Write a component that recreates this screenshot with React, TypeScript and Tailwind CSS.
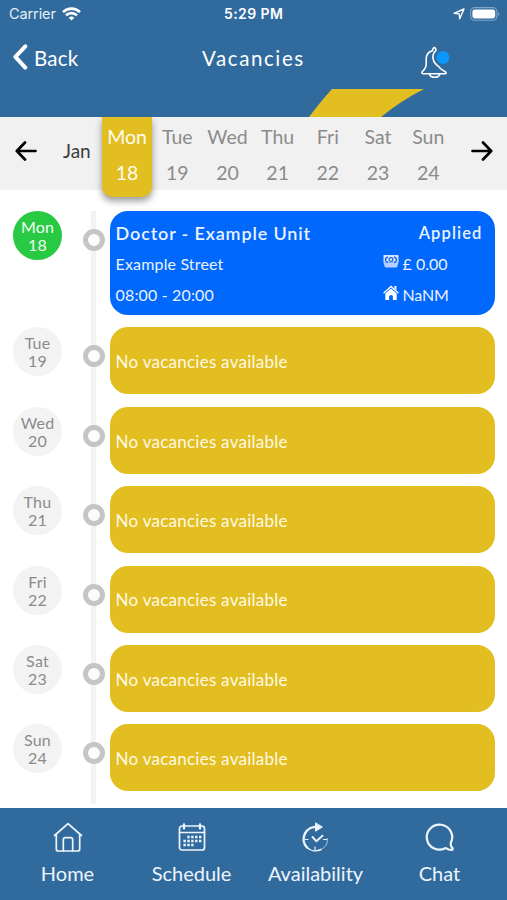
import React, { useState } from "react";

interface Day {
  name: string;
  date: number;
}

const days: Day[] = [
  { name: "Mon", date: 18 },
  { name: "Tue", date: 19 },
  { name: "Wed", date: 20 },
  { name: "Thu", date: 21 },
  { name: "Fri", date: 22 },
  { name: "Sat", date: 23 },
  { name: "Sun", date: 24 },
];

const StatusBar = () => (
  <div className="relative flex h-[28px] items-center justify-between pl-[9px] pr-[7px] font-['Inter',sans-serif] text-white">
    <div className="flex items-center gap-[6px]">
      <span className="text-[14.5px] leading-none tracking-[-0.1px] text-[#e4edf5]">Carrier</span>
      <svg className="mb-[1px]" width="19" height="14" viewBox="0 0 19 14" fill="none" stroke="currentColor" strokeWidth="2.7">
        <path d="M1 5.1a12.2 12.2 0 0 1 17 0" />
        <path d="M4 8.3a8 8 0 0 1 11 0" />
        <path d="M6.7 10.7a4.2 4.2 0 0 1 5.6 0L9.5 13.6z" fill="currentColor" stroke="none" />
      </svg>
    </div>
    <span className="absolute left-[224px] text-[14px] font-semibold leading-none tracking-[0.4px]">5:29 PM</span>
    <div className="flex items-center gap-[5px] pb-[1px]">
      <svg width="12" height="12" viewBox="0 0 12 12" fill="none" stroke="currentColor" strokeWidth="1.4" strokeLinejoin="round">
        <path d="M11 1 6.7 10.8 6.2 5.9 1 5.4z" />
      </svg>
      <svg width="30" height="14" viewBox="0 0 30 14" fill="none">
        <rect x="0.6" y="0.6" width="26.3" height="12.6" rx="4" stroke="#83a6c5" strokeWidth="1.1" />
        <rect x="2.4" y="2.4" width="22.8" height="9" rx="2.3" fill="#fff" />
        <path d="M28.2 5v4.2c1.5-.7 1.5-3.5 0-4.2z" fill="#83a6c5" />
      </svg>
    </div>
  </div>
);

const Header = () => (
  <header className="relative h-[117px] bg-[#316b9e] text-white">
    <StatusBar />
    {/* Yellow stripe */}
    <svg className="absolute left-[308px] top-[88px]" width="118" height="29" viewBox="0 0 118 29">
      <path d="M24 1H116Q94 12 73 29H1Q13 13 24 1z" fill="#e2be20" />
    </svg>
    <div className="relative flex h-[60px] items-center">
      <button className="flex items-center gap-[6px] pl-[13px]">
        <svg className="mb-[2px]" width="15" height="26" viewBox="0 0 15 26" fill="none" stroke="currentColor" strokeWidth="4" strokeLinecap="round" strokeLinejoin="round">
          <path d="M12.3 2.3 2.4 12.8l9.9 10.8" />
        </svg>
        <span className="text-[20.5px] tracking-[0.2px]">Back</span>
      </button>
      <h1 className="absolute left-[202px] text-[20.5px] tracking-[1.6px]">Vacancies</h1>
      {/* Notifications */}
      <svg className="absolute left-[420px] top-[18px]" width="32" height="34" viewBox="0 0 32 34" fill="none" stroke="currentColor" strokeWidth="1.6" strokeLinecap="round" strokeLinejoin="round">
        <path d="M12.7 4.6c-.1-4 3.400-4 3.300 0-2.600 2-3.300 4.600-3 7.600.5 5.200 3.500 7 6.200 8.800 1 2.600 3.800 2.800 6.300 4.900 1 1 .7 1.800-.6 1.800H3.400c-1.500 0-2-1-1-2.200 2-1.800 3.800-3.700 3.800-7.500v-4.500c0-4.600 2-8 6.500-8.900z" />
        <path d="M9.500 27.800c.6 4.600 9.700 4.600 10.300 0" />
        <circle cx="23" cy="11.5" r="6.5" fill="#0c98fb" stroke="none" />
      </svg>
    </div>
  </header>
);

interface WeekStripProps {
  selected: number;
  onSelect: (date: number) => void;
}

const WeekStrip: React.FC<WeekStripProps> = ({ selected, onSelect }) => (
  <div className="relative z-10 flex h-[73px] bg-[#f1f1f1]">
    <div className="flex w-[102px] items-center pl-[15px] pb-[6px]">
      <svg width="22" height="20" viewBox="0 0 22 20" fill="none" stroke="#000" strokeWidth="2.7" strokeLinecap="round" strokeLinejoin="round">
        <path d="M20.5 10H1.8M10 1.5 1.8 10l8.2 8.5" />
      </svg>
      <span className="ml-[26px] pt-[1px] text-[19px] text-[#3c3c3c]">Jan</span>
    </div>
    {days.map((day) => (
      <button
        key={day.date}
        onClick={() => onSelect(day.date)}
        className={`flex w-[50.2px] shrink-0 flex-col items-center gap-[9px] pt-[5.5px] text-[19.5px] leading-[27px] ${
          day.date === selected
            ? "relative h-[80px] rounded-b-[10px] bg-[#e2be20] text-[#fffdf0] shadow-[0_4px_7px_rgba(0,0,0,0.4)] [clip-path:inset(0_-12px_-14px_-12px)]"
            : "text-[#8b8b8b]"
        }`}
      >
        <span>{day.name}</span>
        <span>{day.date}</span>
      </button>
    ))}
    <div className="flex flex-1 items-center justify-end pr-[14px] pb-[6px]">
      <svg width="22" height="20" viewBox="0 0 22 20" fill="none" stroke="#000" strokeWidth="2.7" strokeLinecap="round" strokeLinejoin="round">
        <path d="M1.5 10h18.7M12 1.5 20.2 10 12 18.5" />
      </svg>
    </div>
  </div>
);

const ShiftCard = () => (
  <div className="h-[104px] flex-1 rounded-[18px] bg-[#0068fd] pl-[6px] pt-[7px] text-[16px] text-[#eaf2ff]">
    <div className="flex h-[30px] items-center justify-between pr-[12px] font-semibold">
      <span className="text-[18px] tracking-[0.85px]">Doctor - Example Unit</span>
      <span className="pt-[1px] text-[16.5px] tracking-[1.1px]">Applied</span>
    </div>
    <div className="flex h-[31px] items-center">
      <span className="w-[267px] tracking-[0.15px]">Example Street</span>
      <svg className="mb-[5px] mr-[4px]" width="16" height="14" viewBox="0 0 16 14">
        <path d="M.5 1h15v7.5H.5z" fill="#d5e5ff" />
        <path d="M.5 8.500h15l-1.200 4a1.500 1.500 0 0 1-1.300 1H3a1.500 1.500 0 0 1-1.300-1z" fill="#b5d1ff" />
        <path d="M5 2.8Q2 4 2.500 6.500 3 8 5 8.500M11 2.800Q14 4 13.500 6.500 13 8 11 8.500" fill="none" stroke="#1763dc" strokeWidth="1.3" />
        <circle cx="8" cy="5.6" r="1.900" fill="none" stroke="#1763dc" strokeWidth="1.2" />
      </svg>
      <span>£ 0.00</span>
    </div>
    <div className="flex h-[31px] items-center">
      <span className="w-[267px] tracking-[0.15px]">08:00 - 20:00</span>
      <svg className="mb-[5px] mr-[4px]" width="16" height="15" viewBox="0 0 16 15" fill="#fff">
        <path d="M8 3.500 2.300 8.500V15h3.800v-3.500q0-1.600 1.900-1.600t1.900 1.600V15h3.800V8.500z" />
        <path d="M1 7.700 8 1.500l7 6.200" fill="none" stroke="#fff" strokeWidth="1.4" strokeLinecap="round" />
        <path d="M11.400 1h2v4.200l-2-1.700z" />
      </svg>
      <span className="tracking-[-0.2px]">NaNM</span>
    </div>
  </div>
);

const EmptyCard = () => (
  <div className="flex h-[67px] flex-1 items-center rounded-[18px] bg-[#e2be20] pl-[6px] pt-[2px] text-[17px] tracking-[0.25px] text-[#fff9e5]">
    No vacancies available
  </div>
);

interface TimelineRowProps {
  day: Day;
  active: boolean;
}

const TimelineRow: React.FC<TimelineRowProps> = ({ day, active }) => (
  <div className="flex items-start">
    <div
      className={`flex size-[49px] flex-col items-center justify-center text-[16px] leading-[18px] tracking-[0.2px] rounded-full pt-[1px] ${
        active ? "bg-[#29ca43] text-[#f2fff4]" : "bg-[#f3f3f3] text-[#8b8b8b]"
      }`}
    >
      <span>{day.name}</span>
      <span>{day.date}</span>
    </div>
    <div className="ml-[20.6px] mr-[5px] mt-[18px] size-[22px] rounded-full border-[5px] border-[#c5c5c5] bg-[#fcfcfc]" />
    {active ? <ShiftCard /> : <EmptyCard />}
  </div>
);

const Timeline = () => (
  <main className="relative flex h-[618px] flex-col gap-[12.4px] bg-white pl-[13px] pr-[12.5px] pt-[21px]">
    {/* Vertical rail behind the rings */}
    <div className="absolute left-[91px] top-[21px] h-[593px] w-[5px] bg-[#f3f3f3]" />
    {days.map((day) => (
      <div key={day.date} className="relative">
        <TimelineRow day={day} active={day.date === 18} />
      </div>
    ))}
  </main>
);

const HomeIcon = () => (
  <svg width="30" height="32" viewBox="0 0 30 32" fill="none" stroke="currentColor" strokeWidth="1.7" strokeLinecap="round" strokeLinejoin="round">
    <path d="M1.500 13.500 15 1.700l13.500 11.800M3.300 12.500V27q0 2 2 2h19.400q2 0 2-2V12.500" />
    <path d="M10.300 29V17.700q0-2 2-2h5.400q2 0 2 2V29" />
  </svg>
);

const ScheduleIcon = () => (
  <svg width="30" height="32" viewBox="0 0 30 32" fill="none" stroke="currentColor" strokeWidth="1.7" strokeLinecap="round" strokeLinejoin="round">
    <rect x="2.5" y="4" width="25" height="24" rx="2.5" />
    <path d="M2.500 10.500h25" />
    <path d="M7 2.500V6.500M23 2.500V6.500" strokeWidth="2.3" />
    <path d="M10.300 15H25M6.400 19H25M6.400 23H17.500" strokeWidth="2.4" strokeLinecap="butt" strokeDasharray="2.4 1.5" />
  </svg>
);

const AvailabilityIcon = () => (
  <svg width="30" height="32" viewBox="0 0 30 32" fill="none" stroke="currentColor" strokeWidth="1.7" strokeLinecap="round" strokeLinejoin="round">
    <path d="M16.500 5A12.200 12.200 0 0 0 6 25.500" strokeWidth="2.5" />
    <path d="M6 25.500a12.200 12.200 0 0 0 14 2" strokeWidth="1.5" />
    <path d="M20 27.500c4.500-2.200 7-6 6.200-11" strokeWidth="1" strokeOpacity="0.7" />
    <path d="M14.500 1.200v8L21 5.200z" fill="currentColor" strokeWidth="1" />
    <path d="m11.500 15 3.800 4.200 6.200-5.500" strokeWidth="1.9" />
    <path d="M4.500 17.500H7M22.500 17.500h3M14 25v2.500" strokeWidth="1.2" />
  </svg>
);

const ChatIcon = () => (
  <svg width="30" height="32" viewBox="0 0 30 32" fill="none" stroke="currentColor" strokeWidth="2.2" strokeLinecap="round" strokeLinejoin="round">
    <path d="M26 20.400A12.700 12.500 0 1 0 20.200 26.300c1.200-.6 2.200.9 3.400 1.200q1.800.5 4 .2.300-1.400-.9-2.600-1.500-2-.7-4.700z" />
  </svg>
);

const navItems = [
  { label: "Home", icon: <HomeIcon /> },
  { label: "Schedule", icon: <ScheduleIcon /> },
  { label: "Availability", icon: <AvailabilityIcon /> },
  { label: "Chat", icon: <ChatIcon /> },
];

const BottomNav = () => (
  <nav className="flex h-[92px] bg-[#316b9e] px-[5.5px] text-[#edf5fc]">
    {navItems.map((item) => (
      <button key={item.label} className="flex flex-1 flex-col items-center pt-[14px]">
        {item.icon}
        <span className="mt-[5px] text-[20px] leading-[28px]">{item.label}</span>
      </button>
    ))}
  </nav>
);

export default function App() {
  const [selected, setSelected] = useState(18);

  return (
    <div className="h-[900px] w-[507px] overflow-hidden bg-white font-['Lato',sans-serif]">
      <Header />
      <WeekStrip selected={selected} onSelect={setSelected} />
      <Timeline />
      <BottomNav />
    </div>
  );
}
